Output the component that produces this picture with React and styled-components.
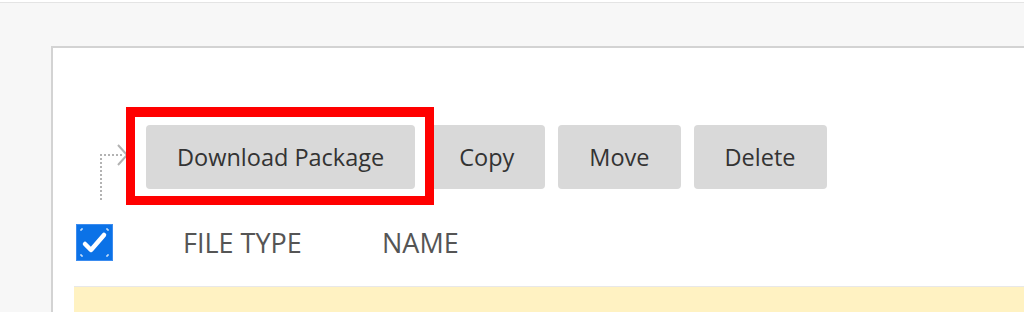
import React from "react";
import styled, { createGlobalStyle } from "styled-components";

const GlobalStyle = createGlobalStyle`
  html, body {
    margin: 0;
    padding: 0;
    background: #f7f7f7;
    font-family: "Open Sans", "Liberation Sans", sans-serif;
  }
  #root {
    height: 312px;
    overflow: hidden;
  }
`;

const Page = styled.div`
  height: 312px;
  padding-top: 2px;
  background: #ffffff;
  box-sizing: border-box;
`;

const Backdrop = styled.div`
  height: 100%;
  background: #f7f7f7;
  border-top: 1px solid #e4e4e4;
  padding: 43px 0 0 51px;
  box-sizing: border-box;
`;

const Panel = styled.div`
  height: 100%;
  background: #ffffff;
  border-top: 2px solid #d3d3d3;
  border-left: 2px solid #d3d3d3;
  padding-top: 77px;
  box-sizing: border-box;
`;

const Toolbar = styled.div`
  display: flex;
  align-items: flex-start;
  gap: 13px;
  height: 64px;
`;

const Connector = styled.svg`
  width: 32px;
  height: 62px;
  margin: 15px 5px 0 43px;
  flex-shrink: 0;
`;

const HighlightWrap = styled.div`
  position: relative;
`;

const Highlight = styled.div`
  position: absolute;
  top: -18px;
  left: -20px;
  right: -19px;
  bottom: -16px;
  border: 9px solid #ff0000;
  border-top-width: 10px;
  pointer-events: none;
  z-index: 2;
`;

const Button = styled.button`
  height: 64px;
  padding: 0 31px;
  border: none;
  border-radius: 4px;
  background: #d9d9d9;
  color: #333333;
  font-family: "Open Sans", "Liberation Sans", sans-serif;
  font-size: 23.5px;
  cursor: pointer;
  white-space: nowrap;
`;

const HeaderRow = styled.div`
  display: flex;
  align-items: center;
  margin: 35px 0 0 23px;
  height: 37px;
`;

const Check = styled.div`
  width: 37px;
  height: 37px;
  box-sizing: border-box;
  background: #0b72e7;
  border: 1px solid #3b8cf0;
  display: flex;
  align-items: center;
  justify-content: center;
  flex-shrink: 0;
`;

const HeaderCell = styled.div`
  width: ${(p) => p.$width}px;
  font-size: 27px;
  color: #555555;
`;

const Gap = styled.div`
  width: 70px;
`;

const HighlightedRow = styled.div`
  margin: 25px 0 0 21px;
  height: 40px;
  background: #fff2c2;
  border-top: 1px solid #e8e8e8;
`;

export default function App() {
  return (
    <>
      <GlobalStyle />
      <Page>
        <Backdrop>
          <Panel>
            <Toolbar>
              <Connector viewBox="0 0 32 62">
                <g fill="none" stroke="#b3b3b3" strokeWidth="2">
                  <path d="M5 60 V15 H26" strokeDasharray="2 2" />
                  <path d="M22 5 L31 15 L22 25" />
                </g>
              </Connector>
              <HighlightWrap>
                <Button>Download Package</Button>
                <Highlight />
              </HighlightWrap>
              <Button>Copy</Button>
              <Button>Move</Button>
              <Button>Delete</Button>
            </Toolbar>
            <HeaderRow>
              <Check>
                <svg width="35" height="35" viewBox="0 0 35 35">
                  <g fill="none" stroke="#ffffff" strokeWidth="1">
                    <path d="M4 6 V4 H6" />
                    <path d="M29 4 H31 V6" />
                    <path d="M4 29 V31 H6" />
                    <path d="M29 31 H31 V29" />
                  </g>
                  <path
                    d="M8 19 L14 25 L27 10"
                    fill="none"
                    stroke="#ffffff"
                    strokeWidth="4.5"
                    strokeLinecap="round"
                    strokeLinejoin="round"
                  />
                </svg>
              </Check>
              <Gap />
              <HeaderCell $width={199}>FILE TYPE</HeaderCell>
              <HeaderCell $width={200}>NAME</HeaderCell>
            </HeaderRow>
            <HighlightedRow />
          </Panel>
        </Backdrop>
      </Page>
    </>
  );
}
